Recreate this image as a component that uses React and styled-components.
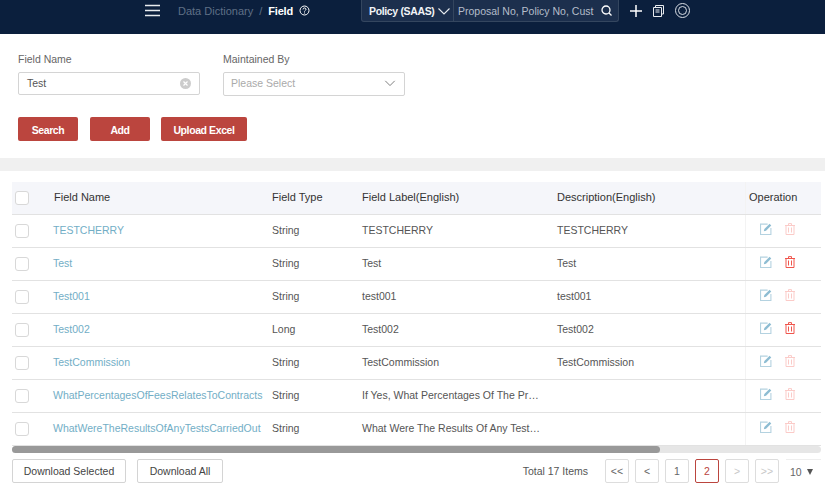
import React from 'react';
import styled, { createGlobalStyle } from 'styled-components';

const Global = createGlobalStyle`
  html, body { margin: 0; padding: 0; background: #fff; }
  body { font-family: "Liberation Sans", Arial, sans-serif; overflow: hidden; }
  * { box-sizing: border-box; }
`;

const Page = styled.div`
  width: 825px;
  height: 490px;
  overflow: hidden;
  display: flex;
  flex-direction: column;
`;

const TopBar = styled.header`
  height: 34px;
  flex: none;
  background: #0b1f3d;
  display: flex;
  align-items: flex-start;
  padding-left: 145px;
  color: #fff;
`;

const Burger = styled.svg`
  width: 15px;
  height: 13px;
  margin-top: 4px;
`;

const Crumbs = styled.div`
  margin-left: 18px;
  width: 183px;
  height: 21px;
  display: flex;
  align-items: center;
  font-size: 11px;
  color: #5f6f86;
`;

const CrumbSep = styled.span`
  margin: 0 6px;
`;

const CrumbNow = styled.span`
  color: #fff;
  font-weight: 700;
  letter-spacing: -0.2px;
`;

const HelpIcon = styled.svg`
  width: 11px;
  height: 11px;
  margin-left: 6px;
`;

const SearchGroup = styled.div`
  width: 258px;
  height: 22px;
  flex: none;
  display: flex;
  background: #1c2f4d;
  border: 1px solid #34465f;
  border-top: none;
  border-radius: 0 0 3px 3px;
`;

const PolicyPick = styled.div`
  width: 92px;
  display: flex;
  align-items: center;
  justify-content: space-between;
  padding: 0 2px 0 7px;
  border-right: 1px solid #34465f;
  font-size: 10.5px;
  font-weight: 700;
  letter-spacing: -0.35px;
  color: #f2f4f7;
  white-space: nowrap;
`;

const QuickSearch = styled.div`
  flex: 1;
  display: flex;
  align-items: center;
  justify-content: space-between;
  padding: 0 6px 0 4px;
  font-size: 10.5px;
  color: #b4bdca;
  white-space: nowrap;
`;

const ToolIcons = styled.div`
  display: flex;
  align-items: center;
  height: 21px;
  margin-left: 11px;
  gap: 11px;
`;

const FilterArea = styled.section`
  height: 124px;
  flex: none;
  padding: 18px 18px 0;
`;

const FieldRow = styled.div`
  display: flex;
  gap: 23px;
`;

const Field = styled.div`
  width: 182px;
`;

const FieldLabel = styled.div`
  font-size: 10.5px;
  line-height: 14px;
  color: #666;
  margin-bottom: 6px;
`;

const InputBox = styled.div`
  height: ${p => p.$tall ? 24 : 23}px;
  border: 1px solid #d4d4d4;
  border-radius: 2px;
  display: flex;
  align-items: center;
  justify-content: space-between;
  padding: 0 8px ${p => p.$tall ? 2 : 1}px ${p => p.$tall ? 7 : 8}px;
  font-size: 10.5px;
  color: ${p => p.$placeholder ? '#aaa' : '#555'};
`;

const Actions = styled.div`
  display: flex;
  margin-top: 21px;
`;

const RedButton = styled.button`
  height: 24px;
  width: ${p => p.$w}px;
  margin-right: ${p => p.$gap}px;
  padding: 2px 0 0;
  border: none;
  border-radius: 2px;
  background: #bb453e;
  color: #fff;
  font: 700 10.5px "Liberation Sans", Arial, sans-serif;
  letter-spacing: -0.4px;
`;

const Band = styled.div`
  height: 13px;
  flex: none;
  background: #f0f0f0;
`;

const Panel = styled.section`
  flex: 1;
  background: #fff;
  padding: 11px 4px 0 12px;
  border-radius: 3px 3px 0 0;
`;

const Row = styled.div`
  display: grid;
  grid-template-columns: 41px 219px 90px 195px 188px 76px;
  height: 33px;
  align-items: center;
  font-size: 10.5px;
  color: #555;
  border-bottom: 1px solid #e2e2e2;
  background: ${p => p.$head ? '#f5f6fa' : '#fff'};
`;

const HeadCell = styled.div`
  color: #333;
  font-size: 11px;
  white-space: nowrap;
  padding-bottom: 2px;
`;

const NameHead = styled(HeadCell)`
  padding-left: 1px;
`;

const Check = styled.span`
  display: block;
  width: 14px;
  height: 14px;
  margin-left: 3px;
  border: 1px solid #d8d8d8;
  border-radius: 3px;
  background: #fff;
`;

const NameLink = styled.a`
  color: #72aec6;
  white-space: nowrap;
  padding-bottom: 2px;
`;

const Cell = styled.div`
  white-space: nowrap;
  padding-bottom: 2px;
`;

const OpCell = styled.div`
  height: 100%;
  display: flex;
  align-items: center;
  gap: 13px;
  padding: 0 0 ${p => p.$head ? 0 : 5}px ${p => p.$head ? 3 : 14}px;
  border-left: 1px solid #f3f3f3;
`;

const ScrollTrack = styled.div`
  height: 7px;
  border-radius: 4px;
  background: #e6e6e6;
  width: 809px;
`;

const ScrollThumb = styled.div`
  height: 100%;
  width: 648px;
  border-radius: 4px;
  background: #999;
`;

const Footer = styled.div`
  margin-top: 6px;
  width: 809px;
  display: flex;
  align-items: center;
`;

const PlainButton = styled.button`
  height: 24px;
  width: ${p => p.$w}px;
  margin-right: 11px;
  padding: 0;
  background: #fff;
  border: 1px solid #d4d4d4;
  border-radius: 2px;
  color: #444;
  font: 10.5px "Liberation Sans", Arial, sans-serif;
`;

const Total = styled.span`
  margin-left: auto;
  margin-right: 17px;
  font-size: 10.5px;
  color: #555;
`;

const Pager = styled.div`
  display: flex;
  gap: 6px;
`;

const PageBtn = styled.div`
  width: 24px;
  height: 24px;
  display: flex;
  align-items: center;
  justify-content: center;
  font-size: 10.5px;
  border-radius: 2px;
  border: 1px solid ${p => p.$active ? '#bb453e' : '#ddd'};
  color: ${p => p.$active ? '#bb453e' : p.$off ? '#c8c8c8' : '#666'};
`;

const SizePick = styled.div`
  width: 35px;
  height: 24px;
  margin-left: 7px;
  padding-left: 4px;
  display: flex;
  align-items: center;
  gap: 5px;
  font-size: 10.5px;
  color: #666;
  border-top: 1px solid #eee;
`;

const Caret = styled.span`
  width: 0;
  height: 0;
  border-left: 3.5px solid transparent;
  border-right: 3.5px solid transparent;
  border-top: 6px solid #555;
`;

const Chevron = ({ color, size = 14 }) => (
  <svg width={size} height={size} viewBox="0 0 14 14" fill="none" style={{ flex: 'none' }}>
    <path d="M1.5 4.5 7 10l5.5-5.5" stroke={color} strokeWidth="1.1" />
  </svg>
);

const EditIcon = () => (
  <svg width="12" height="12" viewBox="0 0 11 11" fill="none" style={{ flex: 'none' }}>
    <path d="M7 1H.5v9.5H10V4.500" stroke="#b4d2e0" strokeWidth="1" />
    <path d="M3.500 7.500 4 5.500 8.800.8l1.500 1.500L5.500 7z" fill="#8dbcd2" />
  </svg>
);

const TrashIcon = ({ active }) => {
  const c = active ? '#f0564d' : '#fbcbc8';
  return (
    <svg width="10" height="12" viewBox="0 0 10 12" fill="none" stroke={c} strokeWidth="1" style={{ flex: 'none' }}>
      <path d="M0 2.500h10M3.500 2.500V.6h3v1.900M1 2.500v9h8v-9M3.500 4.500v5M6.500 4.500v5" />
    </svg>
  );
};

const rows = [
  { name: 'TESTCHERRY', type: 'String', label: 'TESTCHERRY', desc: 'TESTCHERRY' },
  { name: 'Test', type: 'String', label: 'Test', desc: 'Test', canDelete: true },
  { name: 'Test001', type: 'String', label: 'test001', desc: 'test001' },
  { name: 'Test002', type: 'Long', label: 'Test002', desc: 'Test002', canDelete: true },
  { name: 'TestCommission', type: 'String', label: 'TestCommission', desc: 'TestCommission' },
  { name: 'WhatPercentagesOfFeesRelatesToContracts', type: 'String', label: 'If Yes, What Percentages Of The Pr…', desc: '' },
  { name: 'WhatWereTheResultsOfAnyTestsCarriedOut', type: 'String', label: 'What Were The Results Of Any Test…', desc: '' },
];

const App = () => (
  <Page>
    <Global />
    <TopBar>
      <Burger viewBox="0 0 15 13" stroke="#e8ebef" strokeWidth="1.5">
        <path d="M0 1.500h15M0 6.500h15M0 11.500h15" />
      </Burger>
      <Crumbs>
        Data Dictionary<CrumbSep>/</CrumbSep><CrumbNow>Field</CrumbNow>
        <HelpIcon viewBox="0 0 11 11" fill="none" stroke="#fff">
          <circle cx="5.500" cy="5.500" r="4.500" />
          <path d="M4 4.400c0-2 3-2 3 0 0 1-1.500 1-1.500 2.200M5.500 7.500v1" />
        </HelpIcon>
      </Crumbs>
      <SearchGroup>
        <PolicyPick>Policy (SAAS)<Chevron color="#e8ebef" /></PolicyPick>
        <QuickSearch>
          Proposal No, Policy No, Cust
          <svg width="11" height="11" viewBox="0 0 11 11" fill="none" stroke="#fff" strokeWidth="1.3" style={{ flex: 'none' }}>
            <circle cx="5" cy="5" r="4" />
            <path d="m8 8 2.500 2.500" />
          </svg>
        </QuickSearch>
      </SearchGroup>
      <ToolIcons>
        <svg width="12" height="12" viewBox="0 0 12 12" stroke="#fff" strokeWidth="1.5">
          <path d="M6 0v12M0 6h12" />
        </svg>
        <svg width="11" height="12" viewBox="0 0 11 12" fill="none" stroke="#e8ebef">
          <path d="M2.500 2.500V.5h8v8.500H8.500" />
          <path d="M.5 2.500h8v9h-8zM2.500 5h4M2.500 7h4" />
        </svg>
        <svg width="15" height="15" viewBox="0 0 15 15" fill="none" stroke="#d8dde4">
          <circle cx="7.500" cy="7.500" r="7" />
          <circle cx="7.500" cy="7.500" r="4" />
        </svg>
      </ToolIcons>
    </TopBar>

    <FilterArea>
      <FieldRow>
        <Field>
          <FieldLabel>Field Name</FieldLabel>
          <InputBox>
            Test
            <svg width="11" height="11" viewBox="0 0 11 11">
              <circle cx="5.500" cy="5.500" r="5.500" fill="#ccc" />
              <path d="m3.500 3.500 4 4m0-4-4 4" stroke="#fff" strokeWidth="1.2" />
            </svg>
          </InputBox>
        </Field>
        <Field>
          <FieldLabel>Maintained By</FieldLabel>
          <InputBox $tall $placeholder>
            Please Select
            <Chevron color="#777" size={12} />
          </InputBox>
        </Field>
      </FieldRow>
      <Actions>
        <RedButton $w={60} $gap={12}>Search</RedButton>
        <RedButton $w={60} $gap={11}>Add</RedButton>
        <RedButton $w={86} $gap={0}>Upload Excel</RedButton>
      </Actions>
    </FilterArea>

    <Band />

    <Panel>
      <Row $head>
        <Check />
        <NameHead>Field Name</NameHead>
        <HeadCell>Field Type</HeadCell>
        <HeadCell>Field Label(English)</HeadCell>
        <HeadCell>Description(English)</HeadCell>
        <OpCell $head><HeadCell>Operation</HeadCell></OpCell>
      </Row>
      {rows.map(r => (
        <Row key={r.name}>
          <Check />
          <NameLink>{r.name}</NameLink>
          <Cell>{r.type}</Cell>
          <Cell>{r.label}</Cell>
          <Cell>{r.desc}</Cell>
          <OpCell>
            <EditIcon />
            <TrashIcon active={r.canDelete} />
          </OpCell>
        </Row>
      ))}
      <ScrollTrack><ScrollThumb /></ScrollTrack>
      <Footer>
        <PlainButton $w={114}>Download Selected</PlainButton>
        <PlainButton $w={86}>Download All</PlainButton>
        <Total>Total 17 Items</Total>
        <Pager>
          <PageBtn>&lt;&lt;</PageBtn>
          <PageBtn>&lt;</PageBtn>
          <PageBtn>1</PageBtn>
          <PageBtn $active>2</PageBtn>
          <PageBtn $off>&gt;</PageBtn>
          <PageBtn $off>&gt;&gt;</PageBtn>
        </Pager>
        <SizePick>10<Caret /></SizePick>
      </Footer>
    </Panel>
  </Page>
);

export default App;
